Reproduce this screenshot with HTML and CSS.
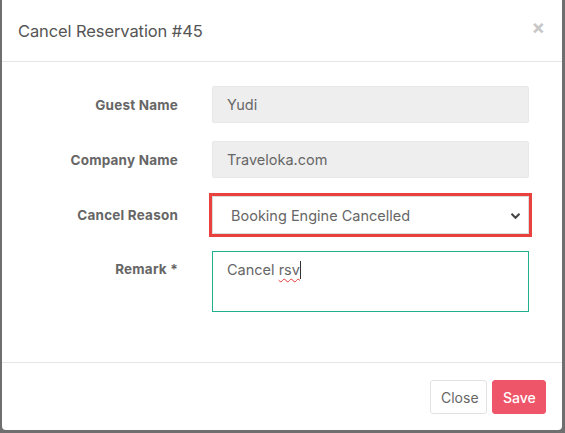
FILE: index.html
```html
<!DOCTYPE html>
<html>
<head>
<meta charset="utf-8">
<link rel="stylesheet" href="styles.css">
</head>
<body>
<div class="backdrop">
  <div class="modal">
    <div class="modal-header">
      <h4 class="title">Cancel Reservation #45</h4>
      <span class="close-x">×</span>
    </div>
    <div class="modal-body">
      <div class="row">
        <label class="label">Guest Name</label>
        <div class="field input readonly">Yudi</div>
      </div>
      <div class="row">
        <label class="label">Company Name</label>
        <div class="field input readonly">Traveloka.com</div>
      </div>
      <div class="row">
        <label class="label">Cancel Reason</label>
        <div class="field select">
          <span>Booking Engine Cancelled</span>
          <svg class="chev" width="11" height="8" viewBox="0 0 11 8"><path d="M1.5 1.8 L5.5 5.8 L9.5 1.8" fill="none" stroke="#444" stroke-width="2"/></svg>
        </div>
      </div>
      <div class="row top">
        <label class="label">Remark *</label>
        <div class="field textarea">Cancel <span class="spell">rsv</span><span class="caret"></span></div>
      </div>
    </div>
    <div class="modal-footer">
      <button class="btn btn-close">Close</button>
      <button class="btn btn-save">Save</button>
    </div>
  </div>
</div>
</body>
</html>
```
FILE: styles.css
```css
* { box-sizing: border-box; }
html, body { margin: 0; padding: 0; }
body {
  width: 565px;
  height: 433px;
  overflow: hidden;
  background: #6f6f6f;
  font-family: Inter, "Open Sans", "Liberation Sans", sans-serif;
}
.backdrop {
  display: flex;
  padding-left: 2px;
  height: 433px;
}
.modal {
  width: 560px;
  height: 430px;
  background: #fff;
  border-radius: 0 0 4px 4px;
  display: flex;
  flex-direction: column;
}
.modal-header {
  height: 62px;
  border-bottom: 1px solid #e5e5e5;
  display: flex;
  align-items: center;
  justify-content: space-between;
  padding: 0 17px 0 16px;
}
.title {
  margin: 0;
  font-size: 16.5px;
  font-weight: 400;
  color: #555;
  letter-spacing: -0.1px;
}
.close-x {
  font-size: 20px;
  font-weight: 700;
  color: #c8c8c8;
  margin-top: -8px;
}
.modal-body {
  flex: 1;
  padding: 24px 0 0 0;
  display: flex;
  flex-direction: column;
  gap: 18px;
}
.row {
  display: flex;
  align-items: center;
}
.row.top { align-items: flex-start; }
.label {
  width: 176px;
  text-align: right;
  font-size: 13.5px;
  font-weight: 700;
  color: #666;
  letter-spacing: 0.2px;
  margin-right: 34px;
}
.row.top .label { padding-top: 9px; }
.field {
  width: 317px;
  font-size: 14.5px;
  color: #666;
}
.input {
  height: 37px;
  line-height: 35px;
  padding: 0 14px;
  border: 1px solid #e8e8e8;
  border-radius: 2px;
}
.readonly { background: #eeeeee; }
.select {
  height: 38px;
  border: 1px solid #dcdcdc;
  outline: 3px solid #e8413e;
  outline-offset: 0px;
  display: flex;
  align-items: center;
  justify-content: space-between;
  padding: 0 7px 0 18px;
  background: #fff;
  box-shadow: 0 0 0 1px #fff;
}
.chev { margin-top: 1px; }
.textarea {
  height: 61px;
  border: 1px solid #1fb08d;
  padding: 8px 14px;
  line-height: 20px;
  margin-top: -1px;
}
.spell {
  text-decoration: underline wavy #e53935;
  text-decoration-thickness: 1px;
  text-underline-offset: 3px;
}
.caret {
  display: inline-block;
  width: 1px;
  height: 18px;
  background: #333;
  vertical-align: -4px;
}
.modal-footer {
  height: 68px;
  border-top: 1px solid #e5e5e5;
  display: flex;
  justify-content: flex-end;
  align-items: flex-start;
  padding: 17px 16px 0 0;
  gap: 5px;
}
.btn {
  height: 34px;
  font-family: inherit;
  font-size: 14px;
  border-radius: 3px;
  padding: 0 10px;
  cursor: pointer;
}
.btn-close {
  width: 57px;
  background: #fff;
  border: 1px solid #e2e2e2;
  color: #666;
}
.btn-save {
  width: 54px;
  background: #ef5569;
  border: 1px solid #ef5569;
  color: #fff;
  font-weight: 500;
}
```
